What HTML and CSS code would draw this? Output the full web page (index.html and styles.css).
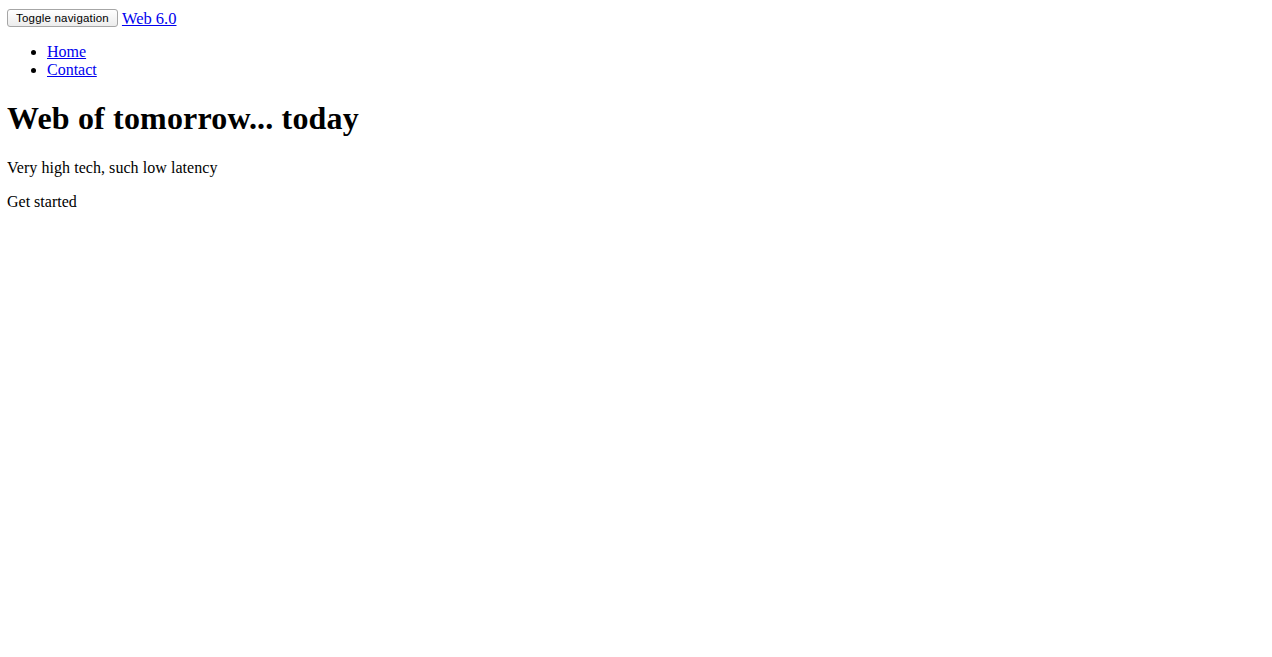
FILE: index.html
```html
<!DOCTYPE html>
<html>
<head>
<meta charset="utf-8">
<title>Web 6.0</title>
<link rel="stylesheet" href="styles.css">
</head>
<body class="page">
<div class="navbar">
<button class="toggle" type="button">Toggle navigation</button> <a class="brand" href="#">Web 6.0</a>
</div>
<ul class="nav">
<li><a href="#">Home</a></li>
<li><a href="#">Contact</a></li>
</ul>
<h1 class="title">Web of tomorrow... today</h1>
<p class="lead">Very high tech, such low latency</p>
<p class="cta">Get started</p>
</body>
</html>
```
FILE: styles.css
```css
.page {
  margin: 8px 7px;
  font-family: "Liberation Serif", "Times New Roman", serif;
  font-size: 16px;
  color: #000;
  background: #fff;
}
.navbar {
  line-height: 19px;
  padding-top: 1px;
}
.toggle {
  font-family: "Liberation Sans", Arial, sans-serif;
  font-size: 11.5px;
  letter-spacing: 0.2px;
  height: 18px;
  padding: 0 8px;
  border: 1px solid #a6a6a6;
  border-radius: 3px;
  background: linear-gradient(#ffffff, #ececec);
  color: #000;
  vertical-align: 2px;
}
.brand {
  font-size: 16.5px;
}
a {
  color: #0000ee;
}
.nav {
  margin: 15px 0 16px;
  padding-left: 40px;
  line-height: 18px;
}
.title {
  font-size: 32px;
  letter-spacing: 0.17px;
  margin: 21px 0 22px;
  line-height: 37px;
}
.lead, .cta {
  margin: 16px 0;
  line-height: 18px;
}
.lead {
  letter-spacing: 0.05px;
}
```
